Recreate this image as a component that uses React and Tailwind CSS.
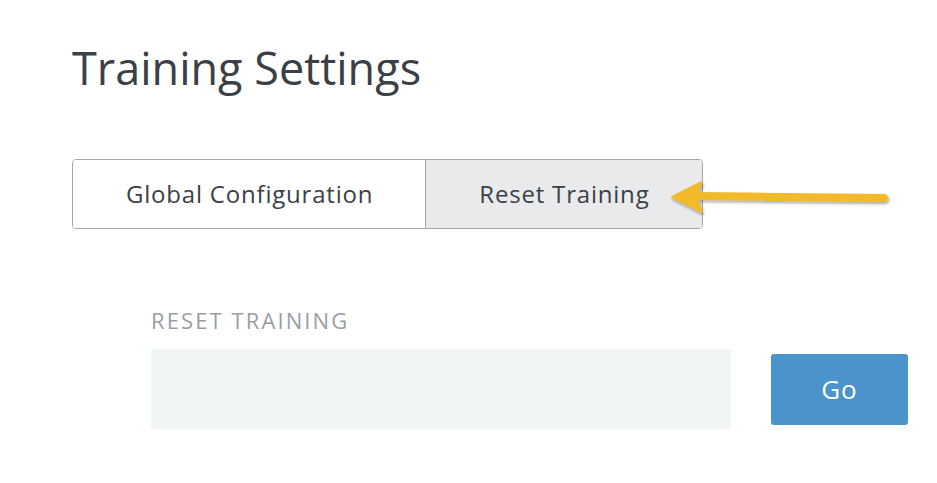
import { useState } from "react";

const font = { fontFamily: '"Open Sans", "Lato", sans-serif' };

const Arrow = () => (
  <svg
    className="absolute left-[660px] top-[176px]"
    width="240"
    height="44"
    viewBox="0 0 240 44"
  >
    <defs>
      <filter id="sh" x="-10%" y="-30%" width="120%" height="160%">
        <feDropShadow dx="1" dy="2" stdDeviation="1.5" floodColor="#000" floodOpacity="0.35" />
      </filter>
    </defs>
    <g filter="url(#sh)">
      <line x1="36" y1="20" x2="224" y2="22" stroke="#f2b92c" strokeWidth="8" strokeLinecap="round" />
      <path d="M12 21 L42 6 L36 20.5 L42 36 Z" fill="#f2b92c" stroke="#f2b92c" strokeWidth="2" strokeLinejoin="round" />
    </g>
  </svg>
);

export default function App() {
  const [tab, setTab] = useState("reset");
  const [value, setValue] = useState("");

  return (
    <div className="relative w-[937px] h-[483px] bg-white pl-[72px] pt-[38px]" style={font}>
      <h1 className="text-[45px] leading-[60px] text-[#3b4047] font-normal">
        Training Settings
      </h1>

      <div className="mt-[61px] inline-flex h-[70px] border border-[#a3a7ac] rounded-[4px] overflow-hidden text-[24px] tracking-[0.8px] text-[#3b4047]">
        <button
          onClick={() => setTab("global")}
          className={`pl-[53px] pr-[52px] ${tab === "global" ? "bg-[#e9eaec]" : "bg-white"}`}
        >
          Global Configuration
        </button>
        <button
          onClick={() => setTab("reset")}
          className={`pl-[53px] pr-[53px] border-l border-[#a3a7ac] ${tab === "reset" ? "bg-[#e9eaec]" : "bg-white"}`}
        >
          Reset Training
        </button>
      </div>

      <div className="ml-[79px] mt-[76px]">
        <label className="block text-[22px] leading-[30px] uppercase text-[#9a9ea4] tracking-[2.1px]">
          Reset Training
        </label>
        <div className="flex items-center mt-[14px]">
          <input
            value={value}
            onChange={(e) => setValue(e.target.value)}
            className="w-[580px] h-[80px] bg-[#f0f5f5] outline-none px-4 text-[22px]"
          />
          <button className="ml-[40px] w-[137px] h-[71px] bg-[#4a94cb] rounded-[3px] text-white text-[26px] tracking-[1px]">
            Go
          </button>
        </div>
      </div>

      <Arrow />
    </div>
  );
}
